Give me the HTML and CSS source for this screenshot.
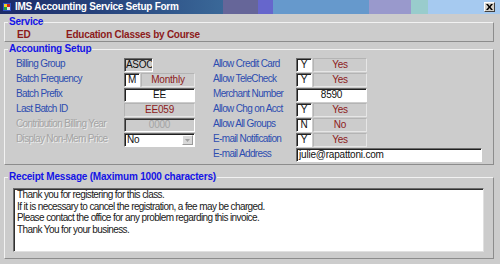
FILE: index.html
```html
<!DOCTYPE html>
<html>
<head>
<meta charset="utf-8">
<link rel="stylesheet" href="styles.css">
</head>
<body>
<div class="window">
  <div class="titlebar">
    <svg class="appicon" width="10" height="10" viewBox="0 0 10 10">
      <rect x="0" y="0" width="10" height="10" fill="#1a2a70"/>
      <rect x="1" y="1" width="8" height="8" fill="#3050c0"/>
      <rect x="2" y="2" width="3" height="3" fill="#f0d020"/>
      <rect x="5" y="2" width="3" height="3" fill="#d02020"/>
      <rect x="2" y="5" width="3" height="3" fill="#20a040"/>
      <rect x="5" y="5" width="3" height="3" fill="#e0e0e0"/>
    </svg>
    <span class="title">IMS Accounting Service Setup Form</span>
    <div class="stripes">
      <span class="s1"></span><span class="s2"></span><span class="s3"></span><span class="s4"></span><span class="s5"></span><span class="s6"></span>
    </div>
    <div class="closebtn">
      <svg width="7" height="6" viewBox="0 0 7 6"><path d="M0 0h2l1.5 2 1.5-2h2l-2.5 3 2.5 3h-2l-1.5-2-1.5 2h-2l2.5-3z" fill="#000"/></svg>
    </div>
  </div>

  <div class="form">
    <fieldset class="panel service">
      <legend>Service</legend>
      <div class="service-row">
        <span class="code">ED</span>
        <span class="desc">Education Classes by Course</span>
      </div>
    </fieldset>

    <fieldset class="panel setup">
      <legend>Accounting Setup</legend>
      <div class="cols">
        <div class="col left">
          <span class="lbl">Billing Group</span>
          <div class="field"><span class="box ro focus w29">ASOC</span></div>

          <span class="lbl">Batch Frequency</span>
          <div class="field"><span class="box in w16 center">M</span><span class="box flat grow center red">Monthly</span></div>

          <span class="lbl">Batch Prefix</span>
          <div class="field"><span class="box in grow center">EE</span></div>

          <span class="lbl">Last Batch ID</span>
          <div class="field"><span class="box flat grow center red">EE059</span></div>

          <span class="lbl dis">Contribution Billing Year</span>
          <div class="field"><span class="box ro grow center dtext">0000</span></div>

          <span class="lbl dis">Display Non-Mem Price</span>
          <div class="field"><span class="box in grow sel">No<span class="drop"><svg width="5" height="3" viewBox="0 0 5 3"><path d="M0 0h5l-2.5 3z" fill="#a0a0a0"/></svg></span></span></div>
        </div>

        <div class="col right">
          <span class="lbl">Allow Credit Card</span>
          <div class="field"><span class="box in w16 center">Y</span><span class="box flat grow center red">Yes</span></div>

          <span class="lbl">Allow TeleCheck</span>
          <div class="field"><span class="box in w16 center">Y</span><span class="box flat grow center red">Yes</span></div>

          <span class="lbl">Merchant Number</span>
          <div class="field"><span class="box in grow center">8590</span></div>

          <span class="lbl">Allow Chg on Acct</span>
          <div class="field"><span class="box in w16 center">Y</span><span class="box flat grow center red">Yes</span></div>

          <span class="lbl">Allow All Groups</span>
          <div class="field"><span class="box in w16 center">N</span><span class="box flat grow center red">No</span></div>

          <span class="lbl">E-mail Notification</span>
          <div class="field"><span class="box in w16 center">Y</span><span class="box flat grow center red">Yes</span></div>

          <span class="lbl">E-mail Address</span>
          <div class="field wide"><span class="box in grow">julie@rapattoni.com</span></div>
        </div>
      </div>
    </fieldset>

    <fieldset class="panel receipt">
      <legend>Receipt Message (Maximum 1000 characters)</legend>
      <div class="memo">
        <div>Thank you for registering for this class.</div>
        <div>If it is necessary to cancel the registration, a fee may be charged.</div>
        <div>Please contact the office for any problem regarding this invoice.</div>
        <div>Thank You for your business.</div>
      </div>
    </fieldset>
  </div>
</div>
</body>
</html>
```

FILE: styles.css
```css
* { box-sizing: border-box; }

html, body {
  margin: 0;
  padding: 0;
  background: #cccccc;
}

body {
  width: 500px;
  height: 264px;
  overflow: hidden;
  font-family: "Liberation Sans", Arial, sans-serif;
  font-size: 10px;
  color: #202020;
}

.titlebar {
  height: 14px;
  display: flex;
  align-items: center;
  position: relative;
  background: linear-gradient(to right, #1c2a68 0px, #25407a 90px, #3a6898 223px);
  color: #fff;
}

.appicon {
  margin-left: 2px;
  flex: none;
}

.title {
  margin-left: 3px;
  font-weight: bold;
  font-size: 10px;
  line-height: 14px;
  white-space: nowrap;
  letter-spacing: -0.25px;
  width: 208px;
  flex: none;
}

.stripes {
  display: flex;
  height: 14px;
  flex: 1;
}

.stripes span { height: 14px; display: block; }
.stripes .s1 { width: 35px; background: #666699; }
.stripes .s2 { width: 15px; background: #6666cc; }
.stripes .s3 { width: 96px; background: #6699cc; }
.stripes .s4 { width: 42px; background: #9999cc; }
.stripes .s5 { width: 17px; background: #99cccc; }
.stripes .s6 { flex: 1; background: #a6caf0; }

.closebtn {
  position: absolute;
  right: 5px;
  top: 2px;
  width: 11px;
  height: 10px;
  background: #d4d0c8;
  border: 1px solid;
  border-color: #ffffff #404040 #404040 #ffffff;
  display: flex;
  align-items: center;
  justify-content: center;
}

.form {
  padding: 2px 6px 0 4px;
}

.panel {
  margin: 0;
  padding: 0;
  border: 1px solid;
  border-color: #f2f2f2 #8c8c8c #8c8c8c #f2f2f2;
  min-width: 0;
}

.panel legend {
  font-family: "Liberation Sans", Arial, sans-serif;
  font-weight: bold;
  font-size: 10px;
  line-height: 12px;
  height: 12px;
  color: #1414e6;
  padding: 0 1px;
  margin-left: 3px;
  letter-spacing: -0.2px;
}

.service-row {
  display: flex;
  height: 12px;
  line-height: 12px;
  margin: 1px 0 0 12px;
  font-weight: bold;
  color: #8c1a1a;
  font-size: 10px;
  letter-spacing: -0.25px;
}

.service-row .code { width: 49px; }

.setup { margin-top: 1px; }

.cols {
  display: flex;
  padding: 2px 0 2px 11px;
}

.col {
  display: grid;
  grid-auto-rows: 15px;
  align-items: start;
}

.col.left { grid-template-columns: 108px 71px; }
.col.right { grid-template-columns: 83px 71px; margin-left: 18px; }

.lbl {
  font-size: 10px;
  letter-spacing: -0.65px;
  color: #2c4cb0;
  line-height: 14px;
  white-space: nowrap;
}

.lbl.dis {
  color: #a4a4a4;
  text-shadow: 1px 1px 0 #ececec;
}

.field {
  display: flex;
  height: 14px;
  gap: 1px;
  margin-top: 1px;
}

.field.wide { width: 186px; }

.box {
  display: block;
  height: 14px;
  line-height: 12px;
  font-size: 10px;
  letter-spacing: -0.2px;
  padding: 0 2px;
  white-space: nowrap;
  overflow: hidden;
  color: #101010;
}

.box.w16 { width: 16px; flex: none; padding: 0; }
.box.w29 { width: 29px; flex: none; }
.box.grow { flex: 1; }
.box.center { text-align: center; }
.box.red { color: #8c1a1a; }

.box.in {
  background: #ffffff;
  border: 1px solid;
  border-color: #6c6c6c #ffffff #ffffff #6c6c6c;
  box-shadow: inset 1px 1px 0 #202020;
}

.box.ro {
  background: #cccccc;
  border: 1px solid;
  border-color: #6c6c6c #ffffff #ffffff #6c6c6c;
  box-shadow: inset 1px 1px 0 #303030;
}

.box.focus { padding: 0 0 0 1px; letter-spacing: -0.3px; }

.box.flat {
  background: #cccccc;
  border: 1px solid;
  border-color: #b4b4b4 #e6e6e6 #e6e6e6 #b4b4b4;
}

.box.dtext { color: #a4a4a4; }

.box.sel {
  display: flex;
  justify-content: space-between;
  align-items: center;
  padding-right: 1px;
}

.drop {
  width: 11px;
  height: 10px;
  background: #d8d8d8;
  border: 1px solid;
  border-color: #ffffff #9a9a9a #9a9a9a #ffffff;
  display: flex;
  align-items: center;
  justify-content: center;
}

.receipt { margin-top: 6px; }

.memo {
  margin: 5px 9px 6px 8px;
  height: 64px;
  background: #ffffff;
  border: 1px solid;
  border-color: #6c6c6c #e0e0e0 #e0e0e0 #6c6c6c;
  box-shadow: inset 1px 1px 0 #303030;
  padding: 0 0 0 3px;
  font-size: 10px;
  letter-spacing: -0.6px;
  line-height: 11.5px;
  color: #202020;
}
```
